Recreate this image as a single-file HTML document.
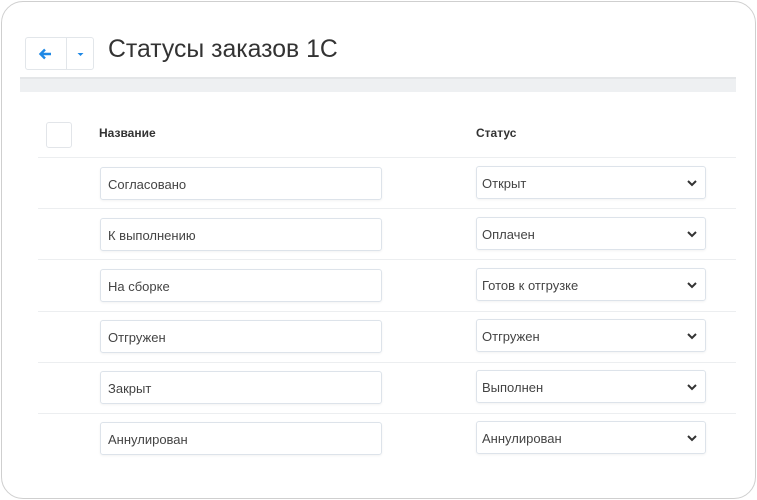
<!DOCTYPE html>
<html><head><meta charset="utf-8"><style>
*{box-sizing:border-box;margin:0;padding:0}
body{width:757px;height:500px;background:#fff;font-family:"Liberation Sans","DejaVu Sans",sans-serif;position:relative;overflow:hidden}
.card{position:absolute;left:1px;top:1px;width:755px;height:498px;border:1px solid #cfcfcf;border-radius:22px;background:#fff}
.btn{position:absolute;top:37px;height:33px;border:1px solid #e2e6ea;background:#fff}
.title{position:absolute;left:108px;top:36px;font-size:24.8px;color:#333}
.bar{position:absolute;left:20px;top:77px;width:716px;height:15px;background:#eef0f2;border-top:2px solid #e4e6e8}
.cb{position:absolute;left:46px;top:122px;width:26px;height:26px;border:1px solid #e2e5e9;border-radius:3px}
.th{position:absolute;top:126px;font-size:12px;font-weight:bold;color:#333}
.line{position:absolute;left:38px;width:698px;height:1px;background:#eceef0}
.in{position:absolute;height:33px;border:1px solid #dde3ea;border-radius:3px;font-size:13px;color:#444;padding:9px 0 0 7px;box-shadow:0 1px 2px rgba(0,0,0,.05)}
.i1{left:100px;width:282px}
.i2{left:476px;width:230px;padding-left:5px}
.chev{position:absolute;right:8px;top:12px}
</style></head><body>
<div class="card"></div>
<div class="btn" style="left:25px;width:42px;border-radius:3px 0 0 3px">
<svg width="42" height="33" style="position:absolute;left:0;top:0"><path d="M25 16H15M19 11.5L14.5 16L19 20.5" stroke="#1e88e5" stroke-width="2.4" fill="none"/></svg></div>
<div class="btn" style="left:66px;width:28px;border-radius:0 3px 3px 0">
<svg width="28" height="33" style="position:absolute;left:0;top:0"><path d="M10.5 15h6l-3 3z" fill="#1e88e5"/></svg></div>
<div class="title">Статусы заказов 1С</div>
<div class="bar"></div>
<div class="cb"></div>
<div class="th" style="left:99px">Название</div>
<div class="th" style="left:476px">Статус</div>
<div class="line" style="top:157px"></div>
<div class="line" style="top:208px"></div>
<div class="line" style="top:259px"></div>
<div class="line" style="top:311px"></div>
<div class="line" style="top:362px"></div>
<div class="line" style="top:413px"></div>

<div class="in i1" style="top:167px">Согласовано</div>
<div class="in i2" style="top:166px">Открыт<svg class="chev" width="10" height="8"><path d="M1 2l4 4 4-4" stroke="#333" stroke-width="2" fill="none"/></svg></div>
<div class="in i1" style="top:218px">К выполнению</div>
<div class="in i2" style="top:217px">Оплачен<svg class="chev" width="10" height="8"><path d="M1 2l4 4 4-4" stroke="#333" stroke-width="2" fill="none"/></svg></div>
<div class="in i1" style="top:269px">На сборке</div>
<div class="in i2" style="top:268px">Готов к отгрузке<svg class="chev" width="10" height="8"><path d="M1 2l4 4 4-4" stroke="#333" stroke-width="2" fill="none"/></svg></div>
<div class="in i1" style="top:320px">Отгружен</div>
<div class="in i2" style="top:319px">Отгружен<svg class="chev" width="10" height="8"><path d="M1 2l4 4 4-4" stroke="#333" stroke-width="2" fill="none"/></svg></div>
<div class="in i1" style="top:371px">Закрыт</div>
<div class="in i2" style="top:370px">Выполнен<svg class="chev" width="10" height="8"><path d="M1 2l4 4 4-4" stroke="#333" stroke-width="2" fill="none"/></svg></div>
<div class="in i1" style="top:422px">Аннулирован</div>
<div class="in i2" style="top:421px">Аннулирован<svg class="chev" width="10" height="8"><path d="M1 2l4 4 4-4" stroke="#333" stroke-width="2" fill="none"/></svg></div>
</body></html>
